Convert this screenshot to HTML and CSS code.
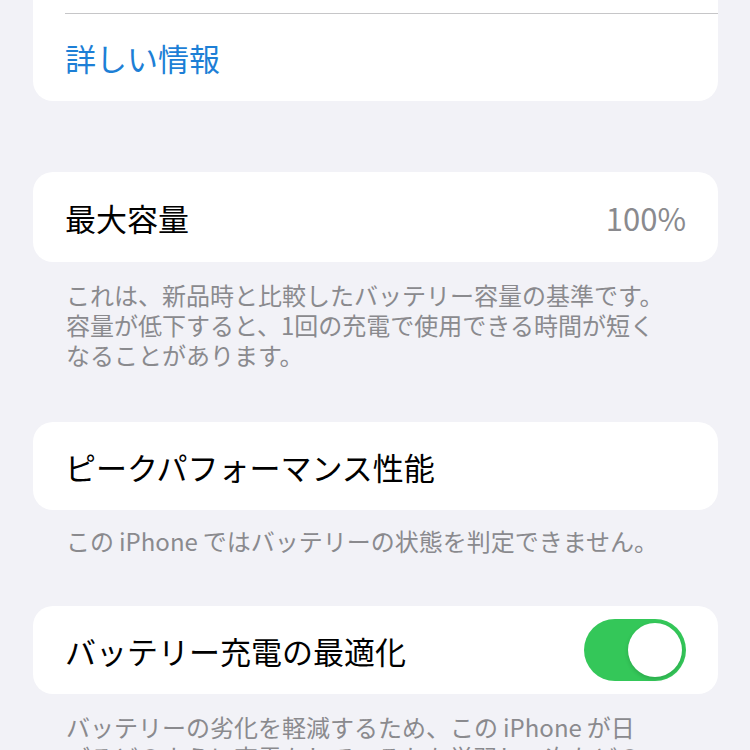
FILE: index.html
```html
<!DOCTYPE html>
<html lang="ja">
<head>
  <meta charset="UTF-8" />
  <meta name="viewport" content="width=device-width, initial-scale=1" />
  <title>バッテリーの状態と充電</title>
  <link rel="stylesheet" href="styles.css">
</head>
<body>

  <div class="group group-top">
    <div class="row row-hidden"></div>
    <div class="row row-link">
      <span class="link">詳しい情報</span>
    </div>
  </div>

  <div class="group">
    <div class="row row-tall">
      <span class="label">最大容量</span>
      <span class="value">100%</span>
    </div>
  </div>
  <p class="footer">これは、新品時と比較したバッテリー容量の基準です。<br>容量が低下すると、1回の充電で使用できる時間が短く<br>なることがあります。</p>

  <div class="group">
    <div class="row">
      <span class="label">ピークパフォーマンス性能</span>
    </div>
  </div>
  <p class="footer footer-short">この<span class="gap"></span>iPhone<span class="gap"></span>ではバッテリーの状態を判定できません。</p>

  <div class="group">
    <div class="row">
      <span class="label">バッテリー充電の最適化</span>
      <span class="toggle on"><span class="knob"></span></span>
    </div>
  </div>
  <p class="footer">バッテリーの劣化を軽減するため、この<span class="gap"></span>iPhone<span class="gap"></span>が日<br>ごろどのように充電をしているかを学習し、次などの<br>状況で充電が80%を超えるのを一時的に停止します。</p>

</body>
</html>
```

FILE: styles.css
```css
body {
  margin: 0;
  background: #f2f2f7;
  font-family: "Noto Sans CJK JP", "Noto Sans", sans-serif;
  overflow: hidden;
}
.group {
  background: #fff;
  border-radius: 20px;
  margin: 0 32px 0 33px;
  overflow: hidden;
}
.group-top {
  margin-top: -75px;
  margin-bottom: 71px;
}
.row {
  height: 88px;
  display: flex;
  align-items: center;
  justify-content: space-between;
  padding: 0 32px;
}
.row-tall {
  height: 90px;
}
.row-hidden {
  border-bottom: 1px solid #c6c6c8;
  margin-left: 32px;
  padding: 0;
}
.row-link {
  height: 87px;
}
.link {
  color: #1d7fd6;
  font-size: 31px;
}
.label {
  color: #000;
  font-size: 31px;
}
.value {
  color: #8a8a8e;
  font-size: 31px;
}
.footer {
  margin: 18px 20px 52px 66px;
  color: #8a8a8e;
  font-size: 24px;
  line-height: 30px;
  white-space: nowrap;
}
.footer-short {
  margin-top: 16px;
  margin-bottom: 50px;
}
.gap {
  display: inline-block;
  width: 5px;
}
.toggle {
  width: 102px;
  height: 62px;
  border-radius: 31px;
  background: #e9e9eb;
  display: flex;
  align-items: center;
  padding: 0 4px;
  box-sizing: border-box;
}
.toggle.on {
  background: #34c759;
  justify-content: flex-end;
}
.knob {
  width: 54px;
  height: 54px;
  border-radius: 50%;
  background: #fff;
  box-shadow: 0 2px 4px rgba(0, 0, 0, 0.15);
}
```
